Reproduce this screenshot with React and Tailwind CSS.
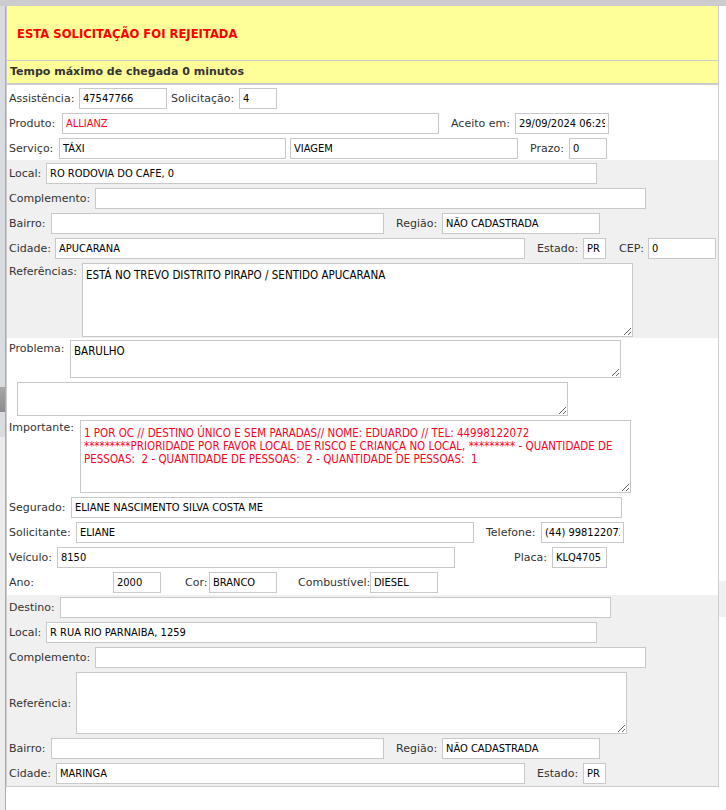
import React from "react";

const labelFont = "font-['DejaVu_Sans',sans-serif]";
const fieldFont = "font-['DejaVu_Sans_Condensed','DejaVu_Sans',sans-serif]";

function Label({ className = "", children }) {
  return (
    <span className={`shrink-0 whitespace-nowrap text-[11px] leading-[13px] text-[#333] ${labelFont} ${className}`}>
      {children}
    </span>
  );
}

function Field({ className = "", value = "", red = false }) {
  return (
    <input
      readOnly
      defaultValue={value}
      className={`h-[21px] shrink-0 border border-[#c8c8c8] bg-white px-[3px] text-[11px] outline-none ${fieldFont} ${red ? "text-[#ff0022]" : "text-black"} ${className}`}
    />
  );
}

function Area({ className = "", value = "", red = false }) {
  return (
    <textarea
      readOnly
      defaultValue={value}
      className={`shrink-0 resize border border-[#c8c8c8] bg-white px-[3px] text-[11.5px] leading-[13px] outline-none ${fieldFont} ${red ? "text-[#ff0022]" : "text-black"} ${className}`}
    />
  );
}

function Row({ className = "", children }) {
  return <div className={`flex h-[21px] items-center pl-[2px] ${className}`}>{children}</div>;
}

const importante =
  "1 POR OC // DESTINO ÚNICO E SEM PARADAS// NOME: EDUARDO // TEL: 44998122072 *********PRIORIDADE POR FAVOR LOCAL DE RISCO E CRIANÇA NO LOCAL, ********* - QUANTIDADE DE PESSOAS:  2 - QUANTIDADE DE PESSOAS:  2 - QUANTIDADE DE PESSOAS:  1";

export default function App() {
  return (
    <div className="min-h-[810px] w-[726px] bg-white">
      <div className="h-[6px] bg-[#cccccc]" />
      <div className="flex min-h-[804px]">
        {/* left scroll strip */}
        <div className="flex w-[6px] shrink-0 flex-col border-r border-[#a9acb0]">
          <div className="h-[381px] bg-[#d8dce0]" />
          <div className="h-[25px] bg-gradient-to-b from-[#a8a8a8] to-[#8c8c8c]" />
          <div className="h-[25px] bg-[#d8dce0]" />
          <div className="flex-1 bg-[#ececec]" />
        </div>

        <div className="w-[713px] shrink-0 self-start border-x border-b border-[#cccccc]">
          <div className="flex h-[55px] items-center border-b border-[#cccccc] bg-[#ffff99] pl-[10px] pt-[3px]">
            <span className={`text-[11.6px] font-bold text-[#ff0000] ${labelFont}`}>ESTA SOLICITAÇÃO FOI REJEITADA</span>
          </div>
          <div className="flex h-[24px] items-center border-b-2 border-[#cccccc] bg-[#ffff99] pl-[3px]">
            <span className={`text-[11px] font-bold text-[#333] ${labelFont}`}>Tempo máximo de chegada 0 minutos</span>
          </div>

          {/* dados da solicitação */}
          <div className="flex flex-col gap-[4px] pt-[3px] pb-[1px]">
            <Row>
              <Label className="w-[70px]">Assistência:</Label>
              <Field className="w-[88px]" value="47547766" />
              <Label className="ml-[4px] w-[68px]">Solicitação:</Label>
              <Field className="w-[38px]" value="4" />
            </Row>
            <Row>
              <Label className="w-[53px]">Produto:</Label>
              <Field className="w-[377px]" value="ALLIANZ" red />
              <Label className="ml-[12px] w-[64px]">Aceito em:</Label>
              <Field className="w-[94px]" value="29/09/2024 06:29" />
            </Row>
            <Row>
              <Label className="w-[50px]">Serviço:</Label>
              <Field className="w-[227px]" value="TÁXI" />
              <Field className="ml-[4px] w-[228px]" value="VIAGEM" />
              <Label className="ml-[12px] w-[39px]">Prazo:</Label>
              <Field className="w-[38px]" value="0" />
            </Row>
          </div>

          {/* local de origem */}
          <div className="flex flex-col gap-[4px] bg-[#f0f0f0] pt-[3px] pb-[1px]">
            <Row>
              <Label className="w-[37px]">Local:</Label>
              <Field className="w-[551px]" value="RO RODOVIA DO CAFE, 0" />
            </Row>
            <Row>
              <Label className="w-[86px]">Complemento:</Label>
              <Field className="w-[551px]" />
            </Row>
            <Row>
              <Label className="w-[42px]">Bairro:</Label>
              <Field className="w-[333px]" />
              <Label className="ml-[12px] w-[46px]">Região:</Label>
              <Field className="w-[158px]" value="NÃO CADASTRADA" />
            </Row>
            <Row>
              <Label className="w-[46px]">Cidade:</Label>
              <Field className="w-[470px]" value="APUCARANA" />
              <Label className="ml-[12px] w-[46px]">Estado:</Label>
              <Field className="w-[23px]" value="PR" />
              <Label className="ml-[13px] w-[29px]">CEP:</Label>
              <Field className="w-[68px]" value="0" />
            </Row>
            <div className="flex items-start pl-[2px]">
              <Label className="w-[73px] pt-[2px]">Referências:</Label>
              <Area className="h-[74px] w-[551px] pt-[5px]" value="ESTÁ NO TREVO DISTRITO PIRAPO / SENTIDO APUCARANA" />
            </div>
          </div>

          {/* problema e segurado */}
          <div className="flex flex-col gap-[4px] pt-[2px] pb-[2px]">
            <div className="flex items-start pl-[2px]">
              <Label className="w-[61px] pt-[2px]">Problema:</Label>
              <Area className="h-[38px] w-[551px] pt-[4px]" value="BARULHO" />
            </div>
            <div className="flex pl-[10px]">
              <Area className="h-[34px] w-[551px] pt-[2px]" />
            </div>
            <div className="flex items-start pl-[2px]">
              <Label className="w-[71px] pt-[1px]">Importante:</Label>
              <Area className="h-[73px] w-[551px] pt-[6px]" value={importante} red />
            </div>
            <Row>
              <Label className="w-[62px]">Segurado:</Label>
              <Field className="w-[551px]" value="ELIANE NASCIMENTO SILVA COSTA ME" />
            </Row>
            <Row>
              <Label className="w-[67px]">Solicitante:</Label>
              <Field className="w-[398px]" value="ELIANE" />
              <Label className="ml-[12px] w-[55px]">Telefone:</Label>
              <Field className="w-[83px]" value="(44) 998122072" />
            </Row>
            <Row>
              <Label className="w-[48px]">Veículo:</Label>
              <Field className="w-[398px]" value="8150" />
              <Label className="ml-[59px] w-[38px]">Placa:</Label>
              <Field className="w-[55px]" value="KLQ4705" />
            </Row>
            <Row>
              <Label className="w-[104px]">Ano:</Label>
              <Field className="w-[48px]" value="2000" />
              <Label className="ml-[24px] w-[24px]">Cor:</Label>
              <Field className="w-[68px]" value="BRANCO" />
              <Label className="ml-[21px] w-[72px]">Combustível:</Label>
              <Field className="w-[68px]" value="DIESEL" />
            </Row>
          </div>

          {/* destino */}
          <div className="flex flex-col gap-[4px] bg-[#f0f0f0] pt-[2px] pb-[2px]">
            <Row>
              <Label className="w-[51px]">Destino:</Label>
              <Field className="w-[551px]" />
            </Row>
            <Row>
              <Label className="w-[37px]">Local:</Label>
              <Field className="w-[551px]" value="R RUA RIO PARNAIBA, 1259" />
            </Row>
            <Row>
              <Label className="w-[86px]">Complemento:</Label>
              <Field className="w-[551px]" />
            </Row>
            <div className="flex items-center pl-[2px]">
              <Label className="w-[67px]">Referência:</Label>
              <Area className="h-[62px] w-[551px] pt-[2px]" />
            </div>
            <Row>
              <Label className="w-[42px]">Bairro:</Label>
              <Field className="w-[333px]" />
              <Label className="ml-[12px] w-[46px]">Região:</Label>
              <Field className="w-[158px]" value="NÃO CADASTRADA" />
            </Row>
            <Row>
              <Label className="w-[47px]">Cidade:</Label>
              <Field className="w-[469px]" value="MARINGA" />
              <Label className="ml-[12px] w-[46px]">Estado:</Label>
              <Field className="w-[23px]" value="PR" />
            </Row>
          </div>
        </div>

        {/* right edge */}
        <div className="flex w-[7px] shrink-0 flex-col">
          <div className="h-[575px]" />
          <div className="h-[36px] bg-[#f0f0f0]" />
        </div>
      </div>
    </div>
  );
}
